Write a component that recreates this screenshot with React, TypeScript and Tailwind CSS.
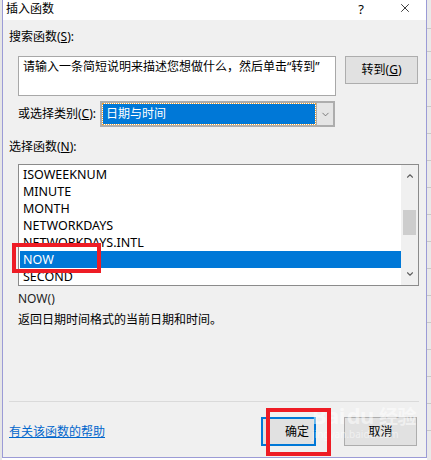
import { X, ChevronUp, ChevronDown } from 'lucide-react';

const font = { fontFamily: '"Noto Sans", "Noto Sans CJK SC", sans-serif' };

const items = ['ISOWEEKNUM', 'MINUTE', 'MONTH', 'NETWORKDAYS', 'NETWORKDAYS.INTL', 'NOW', 'SECOND'];

export default function App() {
  return (
    <div
      className="relative w-[431px] h-[460px] overflow-hidden bg-white text-[12px] text-black flex"
      style={font}
    >
      {/* left sheet strip */}
      <div className="w-[2px] h-full bg-[#e6e6e6]" />

      {/* dialog */}
      <div className="w-[425px] h-[458px] flex flex-col border-x border-b border-[#9b9bd6]">
        {/* title bar */}
        <div className="h-[20px] bg-white flex items-center pl-[3px] pr-[14px]">
          <span className="text-[12px] leading-[16px] -mt-[3px]">插入函数</span>
          <span className="ml-auto text-[13px] leading-[16px] -mt-[3px] mr-[34px]">?</span>
          <X className="w-[14px] h-[14px] -mt-[4px]" strokeWidth={1.3} />
        </div>

        {/* body */}
        <div className="flex-1 bg-[#f0f0f0] flex flex-col">
          <div className="mt-[9px] ml-[6px] h-[16px] leading-[16px]">
            搜索函数(<span className="underline">S</span>):
          </div>

          <div className="mt-[11px] flex items-start">
            <div className="ml-[15px] w-[318px] h-[40px] bg-white border border-[#a8a8a8] px-[4px] pt-[2px] leading-[16px] whitespace-nowrap">
              请输入一条简短说明来描述您想做什么，然后单击“转到”
            </div>
            <button className="ml-[9px] w-[73px] h-[28px] bg-[#e1e1e1] border border-[#adadad] leading-[16px]">
              转到(<span className="underline">G</span>)
            </button>
          </div>

          <div className="mt-[5px] flex items-center h-[26px]">
            <div className="ml-[15px] w-[82px] leading-[16px]">
              或选择类别(<span className="underline">C</span>):
            </div>
            <div className="w-[235px] h-[26px] flex bg-white border-2 border-[#adadad]">
              <div className="flex-1 m-[1px] bg-[#0078d7] text-white outline outline-1 outline-dotted outline-[#f0a030] pl-[3px] leading-[20px]">
                日期与时间
              </div>
              <div className="w-[17px] h-full bg-[#e5e5e5] border-l border-[#adadad] flex items-center justify-center">
                <ChevronDown className="w-[11px] h-[11px] text-[#555]" strokeWidth={1.6} />
              </div>
            </div>
          </div>

          <div className="mt-[12px] ml-[6px] h-[16px] leading-[16px]">
            选择函数(<span className="underline">N</span>):
          </div>

          <div className="mt-[9px] ml-[15px] w-[401px] h-[122px] bg-white border border-[#8b8b8b] flex">
            <div className="flex-1 pt-[1px] pl-[1px] text-[12.5px]">
              {items.map((name) => (
                <div
                  key={name}
                  className={`h-[17px] leading-[17px] pl-[3px] ${name === 'NOW' ? 'bg-[#0078d7] text-white' : ''}`}
                >
                  {name}
                </div>
              ))}
            </div>
            <div className="w-[17px] h-full bg-[#f0f0f0] flex flex-col items-center">
              <ChevronUp className="mt-[6px] w-[10px] h-[10px] text-[#606060]" strokeWidth={2.6} />
              <div className="mt-[29px] w-[13px] h-[25px] bg-[#cdcdcd]" />
              <ChevronDown className="mt-auto mb-[6px] w-[10px] h-[10px] text-[#606060]" strokeWidth={2.6} />
            </div>
          </div>

          <div className="mt-[5px] ml-[15px] h-[16px] leading-[16px] text-[#1e1e1e]">NOW()</div>
          <div className="mt-[5px] ml-[15px] h-[16px] leading-[16px]">返回日期时间格式的当前日期和时间。</div>

          <div className="mt-[73px] ml-[6px] w-[410px] h-px bg-[#dadada]" />

          <div className="mt-[15px] flex items-center h-[29px]">
            <a className="ml-[6px] text-[#0066cc] underline leading-[16px]">有关该函数的帮助</a>
            <button className="ml-[156px] w-[55px] h-[29px] border-2 border-[#0078d7] bg-[#e1e1e1] text-left pl-[22px] leading-[16px]">
              确定
            </button>
            <button className="ml-[28px] w-[73px] h-[29px] border border-[#adadad] bg-[#e1e1e1] leading-[16px]">
              取消
            </button>
          </div>
        </div>
      </div>

      {/* right sheet strip with grid rows */}
      <div className="flex-1 h-full bg-[#e9e9e9] flex flex-col">
        <div className="h-[29px] border-b border-[#c8c8c8]" />
        <div className="h-[23px] border-b border-[#c8c8c8]" />
        <div className="h-[28px] border-b border-[#c8c8c8]" />
        <div className="h-[27px] border-b border-[#c8c8c8]" />
        <div className="h-[27px] border-b border-[#c8c8c8]" />
        <div className="h-[27px] border-b border-[#c8c8c8]" />
        <div className="h-[27px] border-b border-[#c8c8c8]" />
        <div className="h-[27px] border-b border-[#c8c8c8]" />
        <div className="h-[27px] border-b border-[#c8c8c8]" />
        <div className="h-[27px] border-b border-[#c8c8c8]" />
        <div className="h-[27px] border-b border-[#c8c8c8]" />
        <div className="h-[27px] border-b border-[#c8c8c8]" />
        <div className="h-[27px] border-b border-[#c8c8c8]" />
        <div className="h-[27px] border-b border-[#c8c8c8]" />
        <div className="h-[27px] border-b border-[#c8c8c8]" />
        <div className="h-[27px] border-b border-[#c8c8c8]" />
      </div>

      {/* Baidu watermark */}
      <div className="absolute left-[312px] top-[404px] text-white/50 pointer-events-none leading-none">
        <div className="text-[22px] font-bold tracking-tight">
          Bai<span className="ml-[2px]">du</span> <span className="text-[19px]">经验</span>
        </div>
        <div className="mt-[2px] text-[10px]">jingyan.baidu.com</div>
      </div>

      {/* red annotation boxes */}
      <div className="absolute left-[12px] top-[243px] w-[89px] h-[30px] border-4 border-[#ee1c25]" />
      <div className="absolute left-[266px] top-[408px] w-[65px] h-[48px] border-4 border-[#ee1c25]" />
    </div>
  );
}
